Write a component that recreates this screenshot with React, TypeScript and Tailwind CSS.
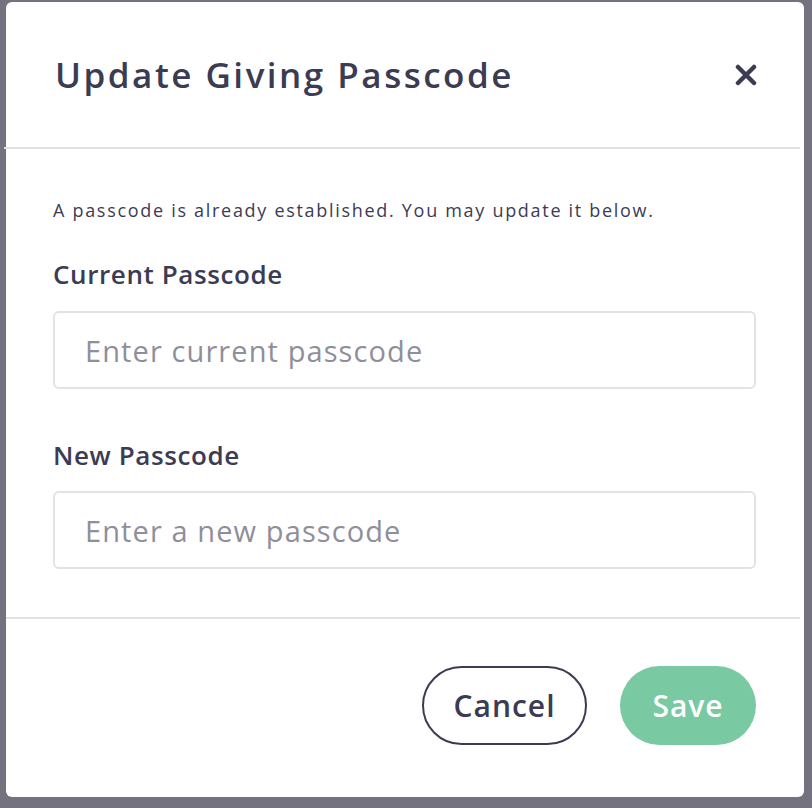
import { useState } from "react";

const font = { fontFamily: "'Open Sans', 'Noto Sans', sans-serif" };

export default function App() {
  const [current, setCurrent] = useState("");
  const [next, setNext] = useState("");

  return (
    <div className="w-[812px] h-[808px] bg-[#74727e] pt-[2px] pl-[6px]" style={font}>
      <div className="w-[798px] h-[795px] bg-white rounded-md flex flex-col text-[#3c3b54]">

        {/* Header */}
        <div className="h-[145px] flex items-center justify-between pl-[49px] pr-[48px]">
          <h1 className="text-[35px] font-semibold leading-none tracking-[2.5px]">Update Giving Passcode</h1>
          <button className="w-[24px] h-[24px] flex items-center justify-center mr-[-2px]" aria-label="Close">
            <svg width="22" height="22" viewBox="0 0 22 22">
              <path d="M3 3 L19 19 M19 3 L3 19" stroke="#3c3b54" strokeWidth="4.5" strokeLinecap="round" />
            </svg>
          </button>
        </div>
        <div className="h-[2px] bg-[#e1e0e7] ml-[-2px] mr-[4px]" />

        {/* Body */}
        <div className="px-[47px] pr-[48px] pt-[49px] pb-[48px]">
          <p className="text-[18px] leading-[24px] tracking-[1.7px]">A passcode is already established. You may update it below.</p>

          <label className="block mt-[37px] text-[26px] font-semibold leading-[30px] tracking-[0.6px]">Current Passcode</label>
          <input
            value={current}
            onChange={e => setCurrent(e.target.value)}
            placeholder="Enter current passcode"
            className="mt-[22px] w-full h-[78px] border-2 border-[#e2e1e8] rounded-md px-[30px] text-[29px] tracking-[1.1px] outline-none placeholder:text-[#8f8e9b]"
          />

          <label className="block mt-[51px] text-[26px] font-semibold leading-[30px] tracking-[0.6px]">New Passcode</label>
          <input
            value={next}
            onChange={e => setNext(e.target.value)}
            placeholder="Enter a new passcode"
            className="mt-[21px] w-full h-[78px] border-2 border-[#e2e1e8] rounded-md px-[30px] text-[29px] tracking-[1.1px] outline-none placeholder:text-[#8f8e9b]"
          />
        </div>
        <div className="h-[2px] bg-[#e1e0e7] mr-[4px]" />

        {/* Footer */}
        <div className="flex justify-end gap-[33px] pt-[47px] pr-[48px]">
          <button className="w-[165px] h-[79px] rounded-full border-2 border-[#3c3b54] text-[30px] font-semibold tracking-[1px]">Cancel</button>
          <button className="w-[136px] h-[79px] rounded-full bg-[#79c9a2] text-white text-[30px] font-semibold tracking-[1px]">Save</button>
        </div>
      </div>
    </div>
  );
}
